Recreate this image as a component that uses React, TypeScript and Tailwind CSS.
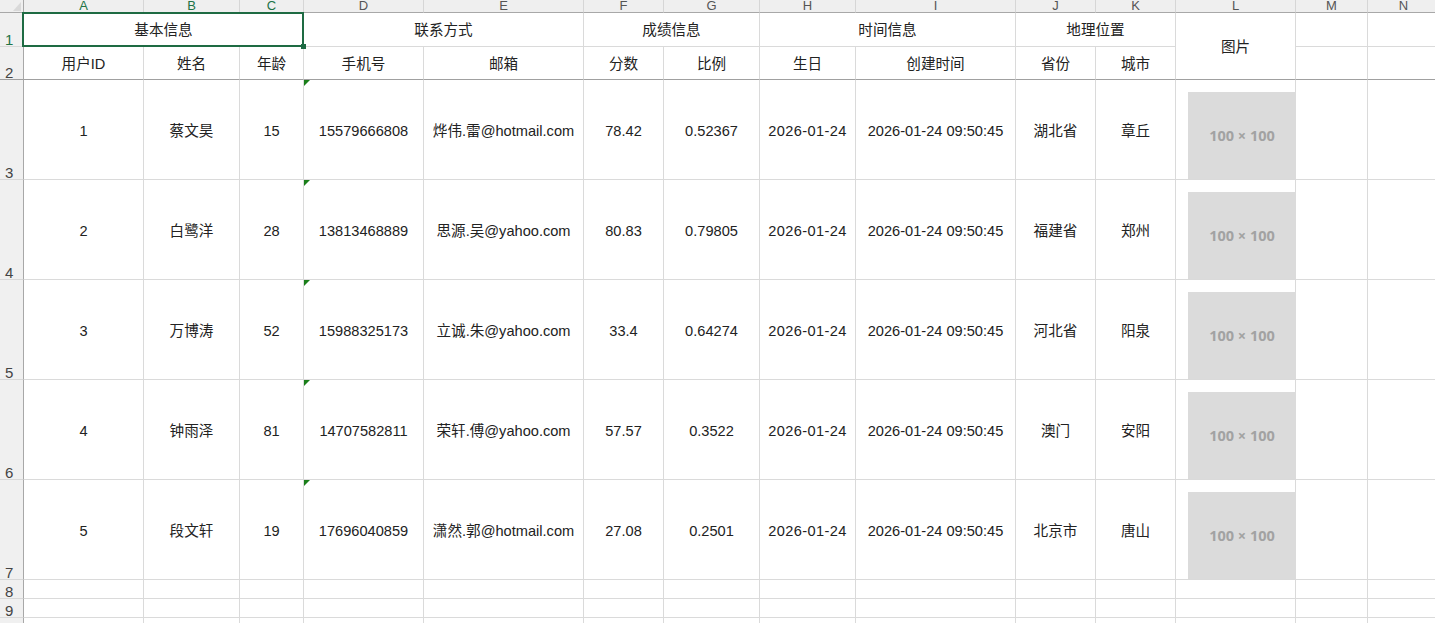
import React from "react";

// Column widths of the sheet (A..N), the row-number column is 24px
const columns = ["A", "B", "C", "D", "E", "F", "G", "H", "I", "J", "K", "L", "M", "N"];
const selectedCols = ["A", "B", "C"];

const rows = [
  { id: 1, name: "蔡文昊", age: 15, phone: "15579666808", email: "烨伟.雷@hotmail.com", score: "78.42", ratio: "0.52367", province: "湖北省", city: "章丘" },
  { id: 2, name: "白鹭洋", age: 28, phone: "13813468889", email: "思源.吴@yahoo.com", score: "80.83", ratio: "0.79805", province: "福建省", city: "郑州" },
  { id: 3, name: "万博涛", age: 52, phone: "15988325173", email: "立诚.朱@yahoo.com", score: "33.4", ratio: "0.64274", province: "河北省", city: "阳泉" },
  { id: 4, name: "钟雨泽", age: 81, phone: "14707582811", email: "荣轩.傅@yahoo.com", score: "57.57", ratio: "0.3522", province: "澳门", city: "安阳" },
  { id: 5, name: "段文轩", age: 19, phone: "17696040859", email: "潇然.郭@hotmail.com", score: "27.08", ratio: "0.2501", province: "北京市", city: "唐山" },
];

const font = "font-['Liberation_Sans','Noto_Sans_CJK_SC',sans-serif]";

function RowLabel({ n, selected, dark }: { n: number; selected?: boolean; dark?: boolean }) {
  return (
    <div
      className={`flex items-end pl-[5px] bg-[#f0f0f0] border-r border-r-[#a8a8a8] border-b text-[15px] leading-[12px] ${
        dark ? "border-b-[#a0a0a0]" : "border-b-[#d8d8d8]"
      } ${selected ? "text-[#217346]" : "text-[#444]"}`}
    >
      {n}
    </div>
  );
}

function Cell({
  children,
  className = "pt-[3px]",
  dark,
}: {
  children?: React.ReactNode;
  className?: string;
  dark?: boolean;
}) {
  return (
    <div
      className={`relative flex items-center justify-center whitespace-nowrap border-r border-r-[#dadada] border-b text-[14.6px] text-[#222] ${
        dark ? "border-b-[#a0a0a0]" : "border-b-[#dadada]"
      } ${className}`}
    >
      {children}
    </div>
  );
}

function TextFlag() {
  return (
    <svg className="absolute left-0 top-0" width="6" height="6" viewBox="0 0 6 6">
      <polygon points="0,0 6,0 0,6" fill="#1a7f1a" />
    </svg>
  );
}

function Placeholder() {
  return (
    <div className="absolute left-[12px] top-[12px] z-10 flex h-[87px] w-[108px] items-center justify-center bg-[#dbdbdb]">
      <span className="font-['Open_Sans',sans-serif] text-[14.5px] font-bold text-[#a2a2a2]">100 × 100</span>
    </div>
  );
}

export default function App() {
  return (
    <div className={`h-[623px] w-[1435px] overflow-hidden bg-white ${font}`}>
      <div className="grid w-[1440px] grid-cols-[24px_120px_96px_64px_120px_160px_80px_96px_96px_160px_80px_80px_120px_72px_72px] grid-rows-[13px_34px_33px_100px_100px_100px_100px_100px_19px_19px_19px]">
        {/* Column header band */}
        <div className="relative bg-[#efefef] border-r border-r-[#a8a8a8] border-b border-b-[#a8a8a8]">
          <svg className="absolute right-[2px] bottom-[1px]" width="8" height="9" viewBox="0 0 8 9">
            <polygon points="8,0 8,9 0,9" fill="#d9d9d9" />
          </svg>
        </div>
        {columns.map((c) => (
          <div
            key={c}
            className={`flex justify-center overflow-hidden bg-[#efefef] border-r border-r-[#d6d6d6] border-b border-b-[#a8a8a8] text-[13px] leading-[12px] ${
              selectedCols.includes(c) ? "text-[#217346]" : "text-[#555]"
            }`}
          >
            {c}
          </div>
        ))}

        {/* Row 1: group headers */}
        <RowLabel n={1} selected />
        <Cell className="col-span-3 pt-[2px]">
          <div className="pointer-events-none absolute -left-[2px] -top-[1px] -right-[1px] -bottom-[1px] z-20 border-2 border-[#1e6b43]" />
          <div className="absolute -right-[3px] -bottom-[3px] z-30 h-[5px] w-[5px] bg-[#1e6b43]" />
          基本信息
        </Cell>
        <Cell className="col-span-2 pt-[2px]">联系方式</Cell>
        <Cell className="col-span-2 pt-[2px]">成绩信息</Cell>
        <Cell className="col-span-2 pt-[2px]">时间信息</Cell>
        <Cell className="col-span-2 pt-[2px]">地理位置</Cell>
        <Cell className="row-span-2 pt-[4px]" dark>图片</Cell>
        <Cell />
        <Cell />

        {/* Row 2: field headers */}
        <RowLabel n={2} dark />
        {["用户ID", "姓名", "年龄", "手机号", "邮箱", "分数", "比例", "生日", "创建时间", "省份", "城市"].map((h) => (
          <Cell key={h} className="pt-[4px]" dark>
            {h}
          </Cell>
        ))}
        <Cell dark />
        <Cell dark />

        {/* Data rows */}
        {rows.map((r, i) => (
          <React.Fragment key={r.id}>
            <RowLabel n={i + 3} />
            <Cell className="pt-[4px]">{r.id}</Cell>
            <Cell className="pt-[4px]">{r.name}</Cell>
            <Cell className="pt-[4px]">{r.age}</Cell>
            <Cell className="pt-[4px]">
              <TextFlag />
              {r.phone}
            </Cell>
            <Cell className="pt-[4px]">{r.email}</Cell>
            <Cell className="pt-[4px]">{r.score}</Cell>
            <Cell className="pt-[4px]">{r.ratio}</Cell>
            <Cell className="pt-[4px] tracking-[0.4px]">2026-01-24</Cell>
            <Cell className="pt-[4px]">2026-01-24 09:50:45</Cell>
            <Cell className="pt-[4px]">{r.province}</Cell>
            <Cell className="pt-[4px]">{r.city}</Cell>
            <Cell>
              <Placeholder />
            </Cell>
            <Cell />
            <Cell />
          </React.Fragment>
        ))}

        {/* Empty rows */}
        {[8, 9, 10].map((n) => (
          <React.Fragment key={n}>
            <RowLabel n={n} />
            {columns.map((c) => (
              <Cell key={c} />
            ))}
          </React.Fragment>
        ))}
      </div>
    </div>
  );
}
